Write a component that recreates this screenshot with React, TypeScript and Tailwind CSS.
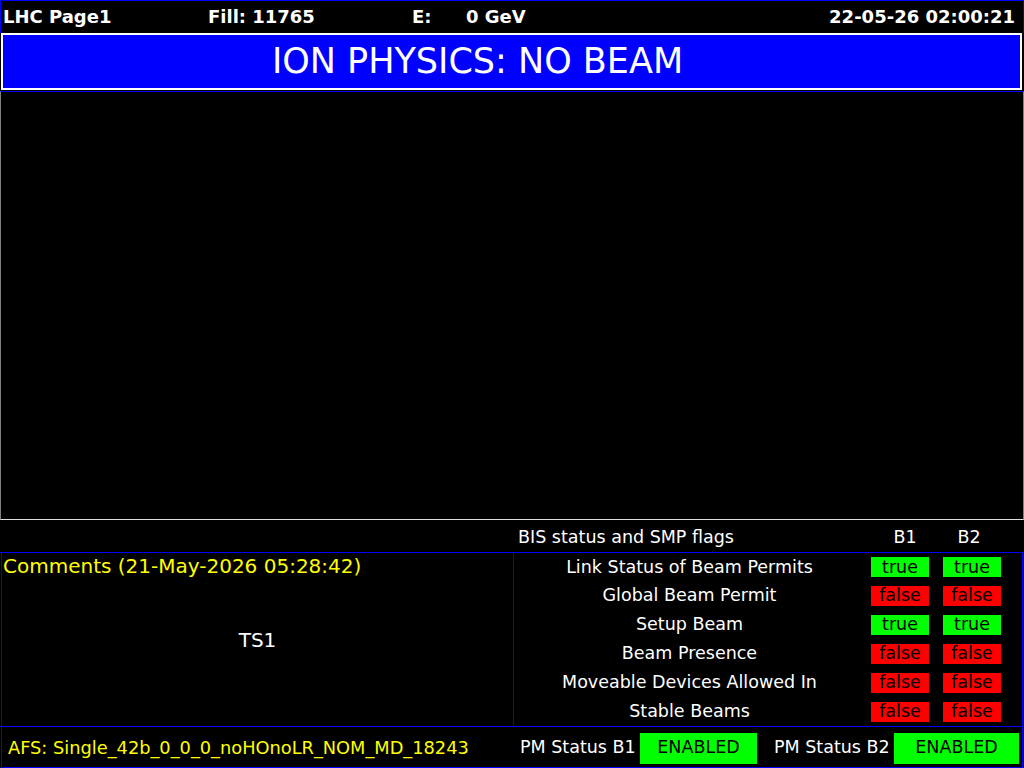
const rows: { label: string; b1: boolean; b2: boolean }[] = [
	{ label: 'Link Status of Beam Permits', b1: true, b2: true },
	{ label: 'Global Beam Permit', b1: false, b2: false },
	{ label: 'Setup Beam', b1: true, b2: true },
	{ label: 'Beam Presence', b1: false, b2: false },
	{ label: 'Moveable Devices Allowed In', b1: false, b2: false },
	{ label: 'Stable Beams', b1: false, b2: false },
]

function Flag({ value }: { value: boolean }) {
	return (
		<div
			className={
				value
					? 'w-[58px] h-[20px] bg-[#00ff00] text-black flex items-center justify-center'
					: 'w-[58px] h-[20px] bg-[#ff0000] text-black flex items-center justify-center'
			}
		>
			{value ? 'true' : 'false'}
		</div>
	)
}

export default function App() {
	return (
		<div className="w-[1024px] h-[768px] bg-black overflow-hidden flex flex-col font-['DejaVu_Sans',sans-serif] text-white">
			{/* header */}
			<div className="h-[33px] border-t border-x border-[#0000ff] flex items-center font-bold text-[18px] leading-none">
				<span className="ml-[2px] w-[205px]">LHC Page1</span>
				<span className="w-[204px]">Fill: 11765</span>
				<span className="w-[54px]">E:</span>
				<span>0 GeV</span>
				<span className="ml-auto mr-[8px]">22-05-26 02:00:21</span>
			</div>

			{/* banner */}
			<div className="h-[57px] ml-[1px] mr-[2px] border-2 border-white bg-[#0000ff] flex items-center justify-center pr-[68px]">
				<span className="text-[35px] leading-none">ION PHYSICS: NO BEAM</span>
			</div>
			<div className="h-[1px]" />

			{/* main plot area */}
			<div className="h-[429px] border-t border-t-[#0000ff] border-b border-b-[#e0e0e0] border-x border-x-[#808080]" />

			{/* BIS header */}
			<div className="h-[32px] pt-[4px] flex items-center text-[17.5px] leading-none">
				<div className="w-[512px]" />
				<span className="flex-1 ml-[6px]">BIS status and SMP flags</span>
				<span className="w-[58px] ml-[4px] text-center">B1</span>
				<span className="w-[58px] ml-[6px] text-center">B2</span>
				<div className="w-[26px]" />
			</div>

			{/* comments + flags */}
			<div className="h-[175px] flex border-t border-b border-[#0000ff]">
				<div className="w-[512px] ml-[1px] border-l border-[#0000ff] grid">
					<div className="col-start-1 row-start-1 text-[#ffff00] text-[20px] leading-none pl-[1px] pt-[3px]">
						Comments (21-May-2026 05:28:42)
					</div>
					<div className="col-start-1 row-start-1 flex items-center justify-center text-[20px] leading-none">
						TS1
					</div>
				</div>
				<div className="flex-1 mr-[1px] border-x border-[#0000ff] flex flex-col text-[17.5px] leading-none">
					{rows.map((r) => (
						<div key={r.label} className="h-[29px] flex items-center">
							<span className="flex-1 text-center pr-[6px]">{r.label}</span>
							<Flag value={r.b1} />
							<div className="w-[14px]" />
							<Flag value={r.b2} />
							<div className="w-[21px]" />
						</div>
					))}
				</div>
			</div>

			{/* footer */}
			<div className="h-[41px] pt-[2px] ml-[1px] mr-[1px] border-x border-b border-[#0000ff] flex items-center text-[17.5px] leading-none">
				<span className="w-[511px] pl-[6px] text-[#ffff00] text-[17.8px]">AFS: Single_42b_0_0_0_noHOnoLR_NOM_MD_18243</span>
				<span className="ml-[7px] w-[120px]">PM Status B1</span>
				<div className="w-[117px] h-[31px] bg-[#00ff00] text-black flex items-center justify-center">ENABLED</div>
				<span className="ml-[17px] w-[120px]">PM Status B2</span>
				<div className="w-[125px] h-[31px] bg-[#00ff00] text-black flex items-center justify-center">ENABLED</div>
			</div>
		</div>
	)
}
